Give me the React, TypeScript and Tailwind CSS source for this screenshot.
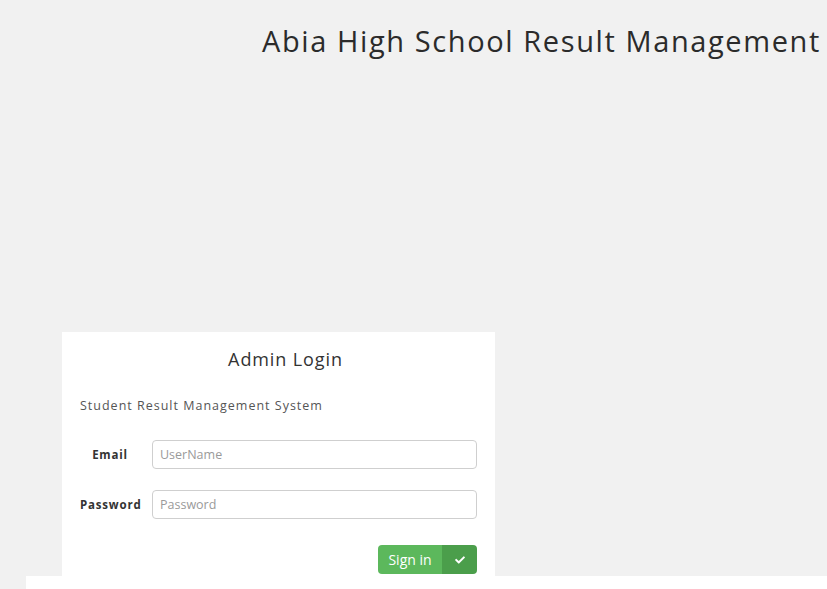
import { FaCheck } from 'react-icons/fa';

const font = { fontFamily: '"Open Sans", "Liberation Sans", sans-serif' };

const Field = ({ label, placeholder, type }: { label: string; placeholder: string; type: string }) => (
  <div className="flex items-center">
    <label className="w-[60px] shrink-0 whitespace-nowrap text-center text-[11.5px] font-bold tracking-[0.07em] text-[#333]">
      {label}
    </label>
    <input
      type={type}
      placeholder={placeholder}
      className="ml-[12px] h-[29px] w-[325px] rounded-[4px] border border-[#cfcfcf] bg-white px-[7px] text-[12.5px] text-[#333] placeholder:text-[#9a9a9a] focus:outline-none"
    />
  </div>
);

export default function App() {
  return (
    <div className="flex min-h-[589px] flex-col bg-[#f1f1f1] text-[#333]" style={font}>
      <h1 className="pl-[262px] pt-[23px] text-[29px] leading-[36px] tracking-[1.6px] text-[#2b2b2b] whitespace-nowrap">
        Abia High School Result Management
      </h1>
      <div className="mt-[273px] ml-[62px] w-[433px] bg-white px-[18px] pt-[14px] pb-[2px]">
        <h2 className="pl-[14px] text-center text-[18px] leading-[26px] tracking-[0.05em] text-[#333]">Admin Login</h2>
        <p className="mt-[24px] text-[12.5px] leading-[20px] tracking-[1px] text-[#555]">Student Result Management System</p>
        <div className="mt-[24px] flex flex-col gap-[21px]">
          <Field label="Email" placeholder="UserName" type="text" />
          <Field label="Password" placeholder="Password" type="password" />
        </div>
        <div className="mt-[26px] flex justify-end">
          <button className="flex h-[29px] overflow-hidden rounded-[4px] text-[14px] text-white">
            <span className="flex w-[64px] items-center justify-center bg-[#5cb85c]">Sign in</span>
            <span className="flex w-[35px] items-center justify-center bg-[#4b9e4b]">
              <FaCheck className="h-[10px] w-[10px]" />
            </span>
          </button>
        </div>
      </div>
      <div className="ml-[26px] flex-1 bg-white" />
    </div>
  );
}
